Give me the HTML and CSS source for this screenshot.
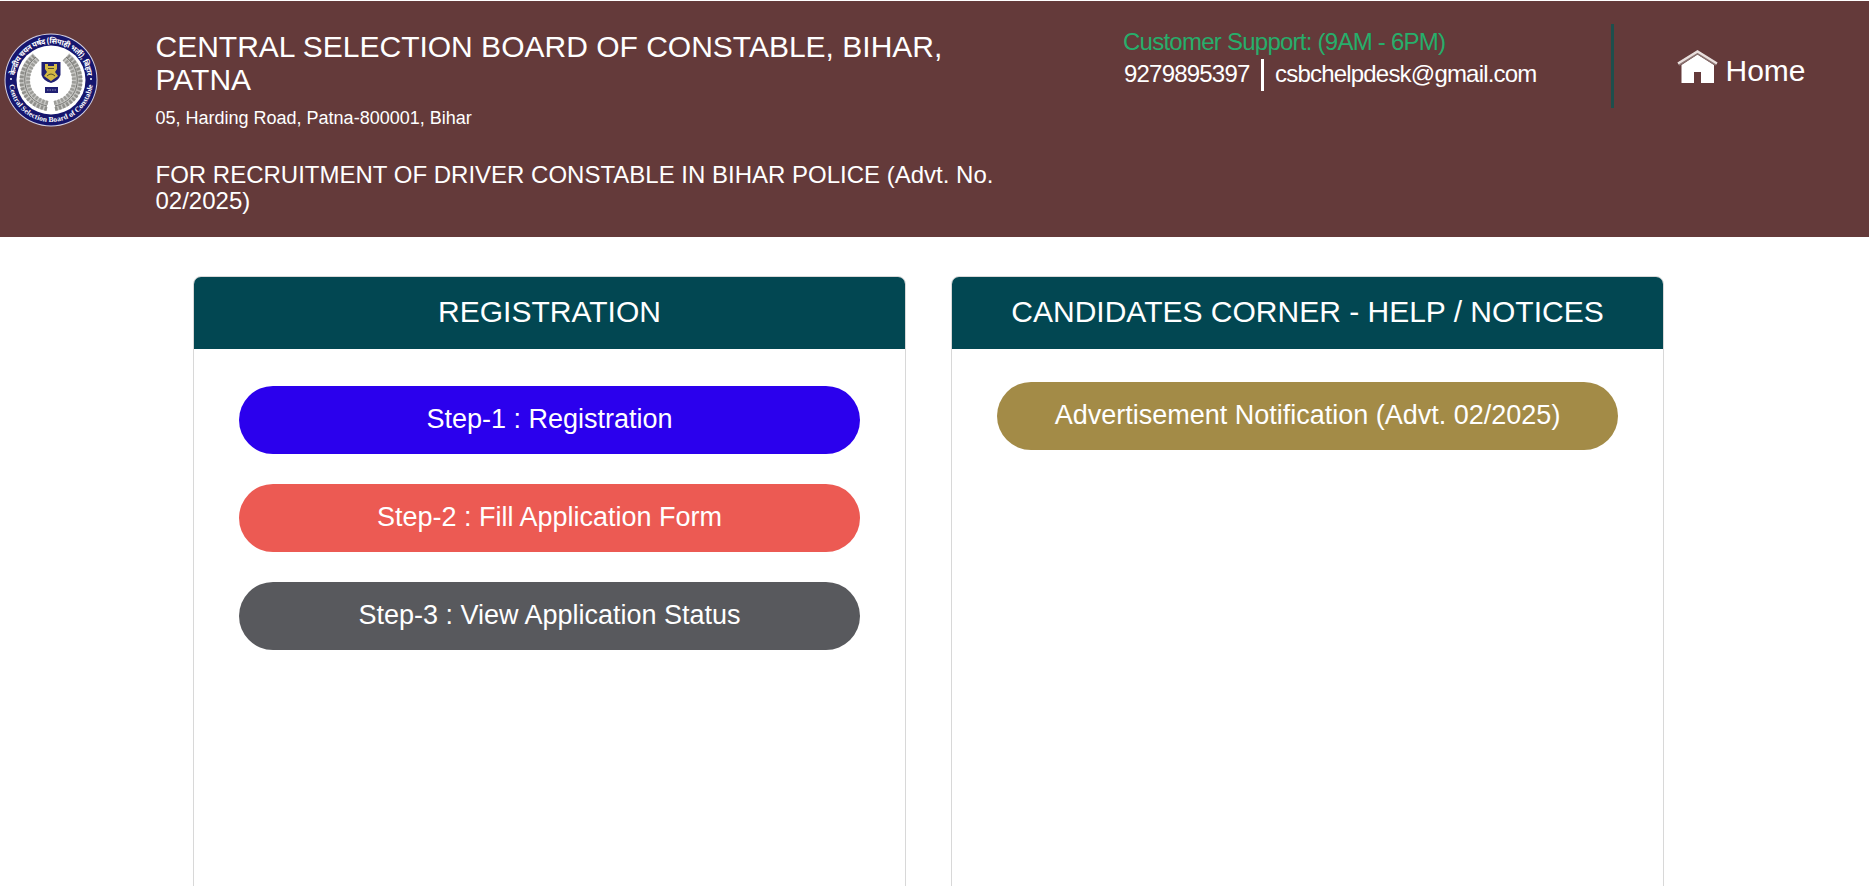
FILE: index.html
```
<!DOCTYPE html>
<html lang="en">
<head>
<meta charset="utf-8">
<title>Central Selection Board of Constable, Bihar</title>
<link rel="stylesheet" href="styles.css">
</head>
<body>
<header class="site-header">
  <svg class="emblem" viewBox="0 0 94 94" role="img" aria-label="Board emblem">
    <defs>
      <path id="arc-top" d="M10.500 47a36.500 36.500 0 0 1 73 0"/>
      <path id="arc-bottom" d="M5 47a42 42 0 0 0 84 0"/>
      <g id="laurel">
        <path d="M43 73C29 70 19 59 21 43C22 35 26 29 32 24" fill="none" stroke="#c6c6c3" stroke-width="10"/>
        <path d="M43 76C25 72 15 59 18 42C19.500 34 24 28 30 23" fill="none" stroke="#8f8f8b" stroke-width="4" stroke-dasharray="2.500 1.500"/>
        <path d="M44 70C31 67 22 57 24.500 43C25.500 36 29 31 34 26" fill="none" stroke="#9c9c98" stroke-width="4" stroke-dasharray="2.300 1.400"/>
        <path d="M43 73C29 70 19 59 21 43C22 35 26 29 32 24" fill="none" stroke="#777773" stroke-width="1"/>
      </g>
    </defs>
    <circle cx="47" cy="47" r="46.500" fill="#d4d2e4"/>
    <circle cx="47" cy="47" r="45.500" fill="#16166e"/>
    <circle cx="47" cy="47" r="34.500" fill="#fff"/>
    <use href="#laurel"/>
    <use href="#laurel" transform="matrix(-1 0 0 1 94 0)"/>
    <path d="M37.500 29h19v13q-2 6-9.500 8q-7.500-2-9.500-8z" fill="#202073"/>
    <path d="M41 31h3v2h6v-2h3v5l-2 3l3 4l-7 5l-7-5l3-4l-2-3z" fill="#d3b944"/>
    <path d="M44 35.500h6M43 43q4-4 8 0" fill="none" stroke="#55502e" stroke-width="1"/>
    <rect x="41" y="54" width="13" height="6" fill="#202073"/>
    <path d="M43 57h9" stroke="#8c8cb6" stroke-width="1" stroke-dasharray="1.500 1"/>
    <text class="seal-text seal-hindi"><textPath href="#arc-top" startOffset="50%" text-anchor="middle" textLength="106">केन्द्रीय चयन पर्षद (सिपाही भर्ती), बिहार</textPath></text>
    <text class="seal-text"><textPath href="#arc-bottom" startOffset="50%" text-anchor="middle" textLength="122">Central Selection Board of Constable</textPath></text>
    <circle cx="7" cy="46" r="1" fill="#fff"/>
    <circle cx="87" cy="46" r="1" fill="#fff"/>
  </svg>
  <div class="board">
    <h1 class="board-name">CENTRAL SELECTION BOARD OF CONSTABLE, BIHAR, PATNA</h1>
    <p class="board-address">05, Harding Road, Patna-800001, Bihar</p>
    <h2 class="board-notice">FOR RECRUITMENT OF DRIVER CONSTABLE IN BIHAR POLICE (Advt. No. 02/2025)</h2>
  </div>
  <div class="support">
    <div class="support-hours">Customer Support: (9AM - 6PM)</div>
    <div class="support-contact"><span class="phone">9279895397</span><span class="email">csbchelpdesk@gmail.com</span></div>
  </div>
  <a class="home">
    <svg class="home-icon" viewBox="0 0 41 34" aria-hidden="true">
      <path d="M4.500 15L20.500 4.500L37 15V33H24V22H17V33H4.500z" fill="#fff"/>
      <path d="M2 15L20.500 3.500L39 15" fill="none" stroke="#8a7371" stroke-width="2"/>
      <path d="M1 13.500L20.500 1.500L40 13.500" fill="none" stroke="#e9dfdd" stroke-width="2.400"/>
    </svg>
    <span class="home-label">Home</span>
  </a>
</header>
<main class="panels">
  <section class="panel">
    <h2 class="panel-title">REGISTRATION</h2>
    <div class="panel-body steps">
      <a class="pill pill-blue">Step-1 : Registration</a>
      <a class="pill pill-red">Step-2 : Fill Application Form</a>
      <a class="pill pill-gray">Step-3 : View Application Status</a>
    </div>
  </section>
  <section class="panel">
    <h2 class="panel-title">CANDIDATES CORNER - HELP / NOTICES</h2>
    <div class="panel-body">
      <a class="pill pill-gold">Advertisement Notification (Advt. 02/2025)</a>
    </div>
  </section>
</main>
</body>
</html>
```
FILE: styles.css
```
* { box-sizing: border-box; }
body {
  margin: 0;
  height: 886px;
  padding-top: 1px;
  overflow: hidden;
  background: #fff;
  color: #fff;
  font-family: "Liberation Sans", Arial, sans-serif;
}
h1, h2, p { margin: 0; font-weight: 400; }

.site-header {
  display: flex;
  align-items: flex-start;
  height: 236px;
  padding-left: 4px;
  background: #643a3a;
}
.emblem { flex: none; width: 94px; height: 94px; margin-top: 32px; }
.seal-text { fill: #fff; font-size: 7.5px; font-weight: 700; font-family: "Liberation Serif", serif; }
.seal-hindi { font-family: "Noto Sans Devanagari", "Noto Sans", sans-serif; }

.board { flex: none; width: 850px; margin: 29px 0 0 57.5px; }
.board-name { font-size: 30px; line-height: 33px; }
.board-address { margin-top: 9px; font-size: 18px; line-height: 26px; }
.board-notice { margin-top: 31px; font-size: 24px; line-height: 26.4px; }

.support {
  flex: none;
  width: 491px;
  height: 84px;
  margin: 23px 0 0 117.5px;
  border-right: 3px solid #1d4f4d;
}
.support-hours { padding-top: 4px; color: #27ae6b; font-size: 24px; line-height: 28px; letter-spacing: -0.75px; }
.support-contact { display: flex; align-items: center; height: 32px; margin-top: 3px; font-size: 24px; line-height: 30px; letter-spacing: -0.8px; }
.phone { height: 32px; width: 141px; padding-left: 1px; border-right: 3px solid #fff; }
.email { height: 32px; padding-left: 11px; }

.home { display: flex; align-items: flex-start; margin: 49px 0 0 63px; gap: 7.5px; }
.home-icon { flex: none; width: 41px; height: 34px; }
.home-label { font-size: 30px; line-height: 42px; }

.panels { display: flex; gap: 45px; padding: 39px 0 0 193px; }
.panel {
  width: 713px;
  height: 640px;
  border: 1px solid #d8d8d8;
  border-radius: 8px 8px 0 0;
}
.panel-title {
  height: 72px;
  border-radius: 7px 7px 0 0;
  background: #024752;
  font-size: 30px;
  line-height: 70px;
  text-align: center;
}
.panel-body { display: flex; flex-direction: column; gap: 30px; padding: 33px 45px 0; }
.steps { padding-top: 37px; }
.pill {
  height: 68px;
  border-radius: 34px;
  font-size: 27px;
  line-height: 67px;
  text-align: center;
}
.pill-blue { background: #2b00ed; }
.pill-red { background: #ec5a53; }
.pill-gray { background: #58595d; }
.pill-gold { background: #a38b47; }
```
